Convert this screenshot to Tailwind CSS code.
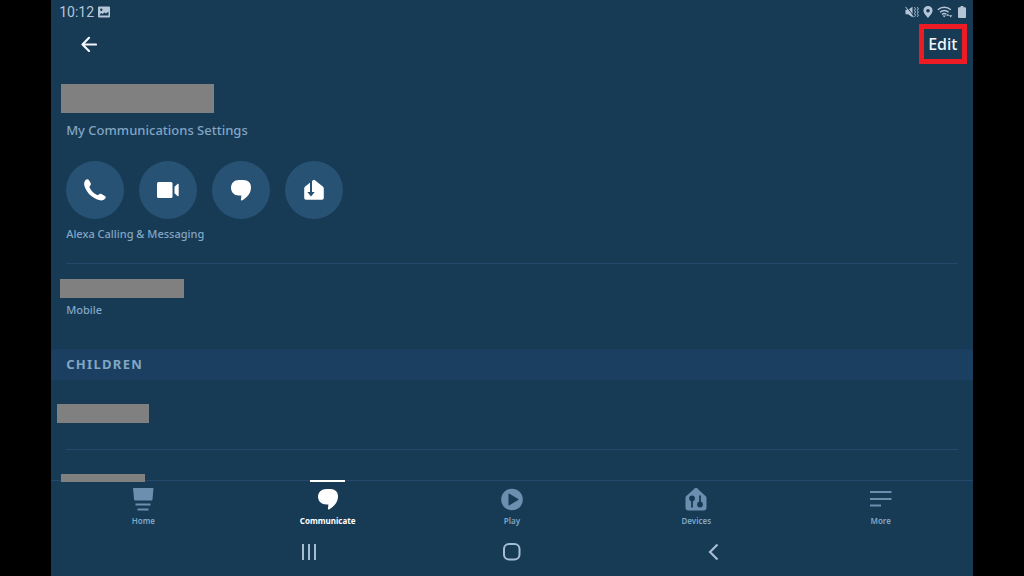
<!DOCTYPE html>
<html lang="en">
<head>
  <meta charset="UTF-8" />
  <meta name="viewport" content="width=device-width, initial-scale=1.0" />
  <title>Contact</title>
  <script src="https://cdn.jsdelivr.net/npm/@tailwindcss/browser@4"></script>
</head>
<body class="bg-black font-['Noto_Sans',sans-serif]">
  <div class="mx-[5%] min-h-screen flex flex-col bg-[#173a55] text-[#82a6c4]">

    <!-- Status bar -->
    <div class="h-6 pl-2 pr-1.5 flex items-center justify-between text-[#b4c6d6]">
      <div class="flex items-center gap-1 font-[Roboto,sans-serif] text-sm leading-6">
        <span>10:12</span>
        <svg class="w-3 h-3" viewBox="0 0 12 12" fill="currentColor" fill-rule="evenodd">
          <path d="M1 .5h10a1 1 0 0 1 1 1v9a1 1 0 0 1-1 1H1a1 1 0 0 1-1-1v-9a1 1 0 0 1 1-1zM1.500 9.500h9V5.500L8 7.500 6.500 6.500 4.500 8 3 7z M3.300 2.500a1.200 1.200 0 1 0 0 2.400 1.200 1.200 0 0 0 0-2.400z" />
        </svg>
      </div>
      <div class="flex items-center gap-1">
        <svg class="w-3.5 h-3" viewBox="0 0 14 12" fill="currentColor">
          <path d="M.5 3.800h2.500L7.500.8v10.400L3 8.200H.5z" />
          <path d="M1.500.5l7.500 10" stroke="#173a55" stroke-width="1" />
          <path d="M.5.8l8 10.400" stroke="currentColor" stroke-width="1" />
          <path d="M9.500 1.200l1 1.600-1 1.600 1 1.600-1 1.600 1 1.600-1 1.600M12.300 1.200l1 1.600-1 1.600 1 1.600-1 1.600 1 1.600-1 1.600" fill="none" stroke="currentColor" />
        </svg>
        <svg class="w-2.5 h-3" viewBox="0 0 10 12" fill="currentColor" fill-rule="evenodd">
          <path d="M5 0a4.600 4.600 0 0 1 4.600 4.600C9.600 7.600 5 12 5 12S.4 7.600.4 4.600A4.600 4.600 0 0 1 5 0zm0 2.900a1.800 1.800 0 1 0 0 3.600 1.800 1.800 0 0 0 0-3.600z" />
        </svg>
        <svg class="w-4 h-3" viewBox="0 0 16 12" fill="none" stroke="currentColor" stroke-width="1.400">
          <path d="M.8 3.800a9.500 9.500 0 0 1 13 0M3 6.200a6.300 6.300 0 0 1 8.600 0M5 8.400a3.500 3.500 0 0 1 4.400 0" />
          <path d="M7.200 11.500L5.600 9.600h3.200z" fill="currentColor" stroke="none" />
          <path d="M9.200 9.800l1.600-2.100 1.600 2.100zM12 9.200h3.400l-1.700 2.200z" fill="currentColor" stroke="none" />
        </svg>
        <svg class="w-2.5 h-3" viewBox="0 0 10 12" fill="currentColor">
          <path d="M3.500 0h3v1.200H8a1 1 0 0 1 1 1V11a1 1 0 0 1-1 1H2a1 1 0 0 1-1-1V2.200a1 1 0 0 1 1-1h1.500z" />
        </svg>
      </div>
    </div>

    <!-- Header -->
    <header class="h-10 pl-[30px] pr-1.5 flex items-center justify-between text-[#f2f6fa]">
      <button type="button" aria-label="Back">
        <svg class="w-4 h-4" viewBox="0 0 16 16" fill="none" stroke="currentColor" stroke-width="2.200" stroke-linecap="round" stroke-linejoin="round">
          <path d="M15 8.500H1.500M8 1.800L1.500 8.500 8 15" />
        </svg>
      </button>
      <button type="button" class="w-12 h-10 border-[5px] border-[#ed1c24] text-base leading-none font-medium">Edit</button>
    </header>

    <main class="flex-1 pt-5">
      <div class="ml-2.5 w-[153px] h-[29px] bg-[#808080]"></div>

      <section class="mx-[15px]">
        <a href="#" class="block mt-2 text-[13px] leading-[18px] font-medium">My Communications Settings</a>
        <div class="mt-[22px] flex gap-[15px] text-white">
          <button type="button" aria-label="Call" class="size-[58px] rounded-full bg-[#285274] flex items-center justify-center">
            <svg class="size-6" viewBox="0 0 24 24" fill="currentColor">
              <path d="M2.600 1.900C3.700.8 5.200.9 5.900 2.100l1.700 3c.6 1.100.3 1.900-.5 2.700-.7.700-.8 1.200-.3 2.100 1.500 2.900 3.900 5.300 6.800 6.800.9.500 1.500.4 2.200-.3.800-.8 1.600-1 2.700-.4l3.300 1.900c1.200.700 1.300 1.800.2 2.900-1.500 1.500-3.400 2-5.900 1.300C9.500 20.300 3.500 14.500 1.500 8.200.7 5.500 1.200 3.300 2.600 1.900z" />
            </svg>
          </button>
          <button type="button" aria-label="Video call" class="size-[58px] rounded-full bg-[#285274] flex items-center justify-center">
            <svg class="size-6" viewBox="0 0 24 24" fill="currentColor">
              <rect x="1" y="4" width="15.500" height="16" rx="1.500" />
              <path d="M18.500 8.700l2.700-2.500c.7-.6 1.500-.4 1.500.6v10.400c0 1-.8 1.200-1.500.6l-2.700-2.500z" />
            </svg>
          </button>
          <button type="button" aria-label="Message" class="size-[58px] rounded-full bg-[#285274] flex items-center justify-center">
            <svg class="size-6" viewBox="0 0 24 24" fill="currentColor">
              <path d="M9.800 2h4.700c4.500 0 7.500 3.100 7.500 7.200 0 5.500-3.300 10-9 13.200-.6.300-1.200 0-1.100-.7l.5-4.200H9.800C5.200 17.500 2 14.300 2 9.800S5.200 2 9.800 2z" />
            </svg>
          </button>
          <button type="button" aria-label="Drop in" class="size-[58px] rounded-full bg-[#285274] flex items-center justify-center">
            <svg class="size-6" viewBox="0 0 24 24" fill="currentColor">
              <path d="M3.200 8.500L11 2.200q1-.8 2 0l7.800 6.300q1 .8 1 2V20a1.800 1.800 0 0 1-1.800 1.800H4a1.800 1.800 0 0 1-1.800-1.800v-9.500q0-1.200 1-2z" />
              <path d="M9 1v14" fill="none" stroke="#285274" stroke-width="2" />
              <path d="M5.300 14h7.400L9 18.500z" fill="#285274" />
            </svg>
          </button>
        </div>
        <p class="mt-[7px] text-[11px] leading-4 font-medium">Alexa Calling &amp; Messaging</p>
        <hr class="mt-[21px] border-[#25496a]" />
      </section>

      <div class="mt-[15px] ml-[9px] w-[124px] h-[19px] bg-[#808080]"></div>
      <p class="mt-1 ml-[15px] text-[11px] leading-4 font-medium">Mobile</p>

      <h2 class="mt-[31px] h-[31px] px-[15px] bg-[#1a3f60] text-[13px] leading-[31px] font-bold tracking-widest">CHILDREN</h2>

      <div class="mt-6 ml-1.5 w-[92px] h-[19px] bg-[#808080]"></div>
      <hr class="mt-[26px] mx-[15px] border-[#25496a]" />
      <div class="relative z-10 mt-6 -mb-0.5 ml-2.5 w-[84px] h-2 bg-[#808080]"></div>
    </main>

    <!-- Tabs -->
    <nav class="h-12 grid grid-cols-5 border-t border-[#25496a] text-[8px] leading-3 font-semibold">
      <a href="#" class="pt-1.5 flex flex-col items-center gap-1">
        <svg class="size-6" viewBox="0 0 24 24" fill="#6c8fb0">
          <path d="M2 1h20.500l-1 11.500q-.1 1-1 1H4.200q-1 0-1.100-1z" />
          <path d="M4.500 17.500h15M6.500 22.500h11" stroke="#6c8fb0" stroke-width="1.800" />
        </svg>
        <span>Home</span>
      </a>
      <a href="#" class="relative pt-1.5 flex flex-col items-center gap-1 text-white font-bold">
        <span class="absolute -top-px w-[35px] h-0.5 bg-white"></span>
        <svg class="size-6" viewBox="0 0 24 24" fill="currentColor">
          <path d="M10.500 2h4C19 2 22 5 22 9.200c0 5.500-3.300 10-9 13.200-.6.300-1.200 0-1.100-.7l.5-4.200h-1.900C5.500 17.500 2 14.300 2 9.800S5.500 2 10.500 2z" />
        </svg>
        <span>Communicate</span>
      </a>
      <a href="#" class="pt-1.5 flex flex-col items-center gap-1">
        <svg class="size-6" viewBox="0 0 24 24">
          <circle cx="12" cy="12.500" r="10.800" fill="#6c8fb0" />
          <path d="M8.500 7.200v10.600q0 1 .9.500l8.800-5.200q.8-.6 0-1.100L9.400 6.700Q8.500 6.200 8.500 7.200z" fill="#173a55" />
        </svg>
        <span>Play</span>
      </a>
      <a href="#" class="pt-1.5 flex flex-col items-center gap-1">
        <svg class="size-6" viewBox="0 0 24 24">
          <path d="M2 9.300L11 1.200q1-.8 2 0l8.800 8.100q.7.700.7 1.700v9.500a3 3 0 0 1-3 3h-15a3 3 0 0 1-3-3V11q0-1 .5-1.700z" fill="#6c8fb0" />
          <g fill="#173a55" stroke="#173a55" stroke-width="1.800">
            <circle cx="8" cy="11.500" r="2" />
            <path d="M8 12v8.500" />
            <circle cx="16" cy="17.500" r="2" />
            <path d="M16 17V8.500" />
          </g>
        </svg>
        <span>Devices</span>
      </a>
      <a href="#" class="pt-1.5 flex flex-col items-center gap-1">
        <svg class="size-6" viewBox="0 0 24 24" fill="none" stroke="#6c8fb0" stroke-width="2">
          <path d="M1 5h21.500M1 12h21.500M1 18.500h11" />
        </svg>
        <span>More</span>
      </a>
    </nav>

    <!-- System navigation -->
    <div class="h-12 px-[17%] grid grid-cols-3 place-items-center text-[#a5bdd2]">
      <button type="button" aria-label="Recent apps">
        <svg class="size-5" viewBox="0 0 20 20" fill="none" stroke="currentColor" stroke-width="2">
          <path d="M4 2v16M10 2v16M16 2v16" />
        </svg>
      </button>
      <button type="button" aria-label="Home screen">
        <svg class="size-5" viewBox="0 0 20 20" fill="none" stroke="currentColor" stroke-width="2">
          <rect x="2" y="2" width="15.500" height="15.500" rx="5" />
        </svg>
      </button>
      <button type="button" aria-label="Go back">
        <svg class="size-5" viewBox="0 0 20 20" fill="none" stroke="currentColor" stroke-width="2.200">
          <path d="M12.500 2.500L5 10l7.500 7.500" />
        </svg>
      </button>
    </div>
  </div>
</body>
</html>
